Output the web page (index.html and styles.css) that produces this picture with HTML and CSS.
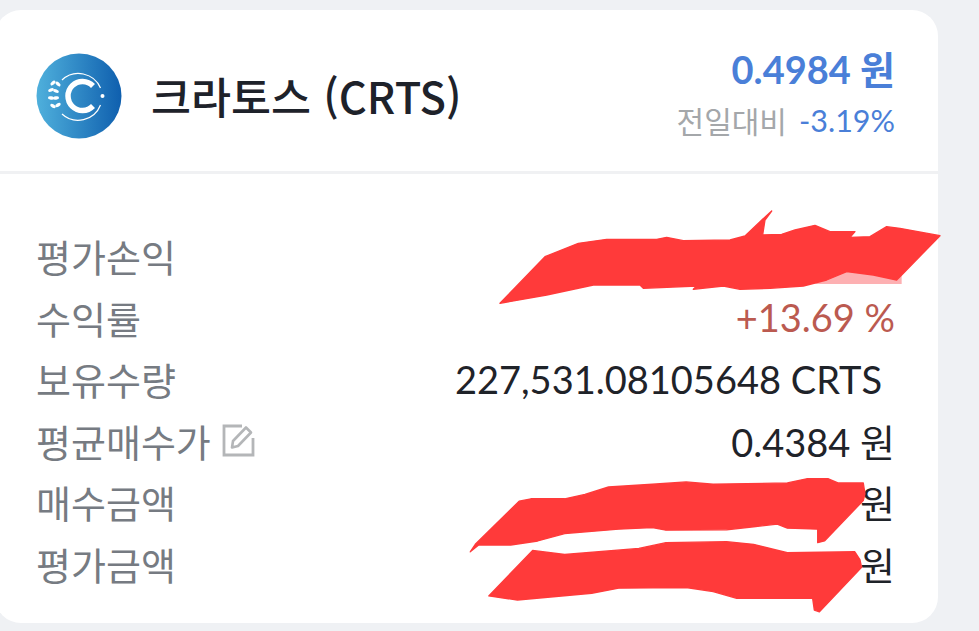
FILE: index.html
```html
<!DOCTYPE html>
<html lang="ko">
<head>
<meta charset="utf-8">
<title>크라토스 (CRTS)</title>
<link rel="stylesheet" href="styles.css">
</head>
<body>
<main class="card">
  <header class="head">
    <div class="coin">
      <svg class="logo" viewBox="0 0 86 86" width="86" height="86" aria-hidden="true">
        <defs>
          <linearGradient id="lg" x1="0" y1="0" x2="1" y2="0">
            <stop offset="0" stop-color="#4fb0dc"/>
            <stop offset="1" stop-color="#0f5fae"/>
          </linearGradient>
        </defs>
        <circle cx="43" cy="43" r="42.5" fill="url(#lg)"/>
        <path d="M57 33 A14.5 14.5 0 1 0 57 53" fill="none" stroke="#fff" stroke-width="5.5"/>
        <path d="M26 27 A24 24 0 0 1 64.5 35" fill="none" stroke="#fff" stroke-width="1.2"/>
        <path d="M64.5 52 A24 24 0 0 1 26 61" fill="none" stroke="#fff" stroke-width="1.2"/>
        <circle cx="66.5" cy="43" r="2" fill="#fff"/>
        <g fill="#fff">
          <ellipse cx="22" cy="31" rx="3" ry="1.7" transform="rotate(40 22 31)"/>
          <ellipse cx="17" cy="30" rx="3" ry="1.7" transform="rotate(-40 17 30)"/>
          <ellipse cx="20" cy="38" rx="3" ry="1.7" transform="rotate(20 20 38)"/>
          <ellipse cx="15" cy="37" rx="3" ry="1.7" transform="rotate(-20 15 37)"/>
          <ellipse cx="20" cy="45" rx="3" ry="1.7" transform="rotate(-10 20 45)"/>
          <ellipse cx="15" cy="45" rx="3" ry="1.7" transform="rotate(10 15 45)"/>
          <ellipse cx="22" cy="52" rx="3" ry="1.7" transform="rotate(-30 22 52)"/>
          <ellipse cx="17" cy="53" rx="3" ry="1.7" transform="rotate(30 17 53)"/>
        </g>
      </svg>
      <h1 class="name">크라토스 (CRTS)</h1>
    </div>
    <div class="quote">
      <div class="price">0.4984 원</div>
      <div class="change"><span class="change-label">전일대비</span><span class="change-value">-3.19%</span></div>
    </div>
  </header>
  <section class="rows">
    <div class="row"><span class="label">평가손익</span><span class="value"></span></div>
    <div class="row"><span class="label">수익률</span><span class="value profit">+13.69 %</span></div>
    <div class="row"><span class="label">보유수량</span><span class="value qty">227,531.08105648 CRTS</span></div>
    <div class="row">
      <span class="label">평균매수가
        <svg class="edit" viewBox="0 0 34 34" width="34" height="34" aria-hidden="true">
          <path d="M20 3H2v29h29V15" fill="none" stroke="#b4b6b8" stroke-width="2.8"/>
          <path d="M11 18 24 4.5l5 5L16 23l-6 1.5z" fill="none" stroke="#b4b6b8" stroke-width="2.6" stroke-linejoin="round"/>
        </svg>
      </span>
      <span class="value">0.4384 원</span>
    </div>
    <div class="row"><span class="label">매수금액</span><span class="value">원</span></div>
    <div class="row"><span class="label">평가금액</span><span class="value">원</span></div>
  </section>
</main>
<svg class="scribbles" viewBox="0 0 979 631" width="979" height="631" aria-hidden="true">
  <g transform="translate(480 200) scale(.33333)">
    <path class="pink" d="M1000 252 1040 240 1100 215 1180 225 1250 240 1265 225 1265 252z"/>
    <path class="red" d="M60 310 195 170 295 130 380 118 530 118 560 112 610 122 750 120 795 108 840 65 875 33 855 60 848 105 905 103 945 90 1005 76 1050 95 1125 95 1110 112 1170 110 1220 80 1260 85 1380 107 1265 225 1250 240 1180 225 1100 215 1040 240 970 258 870 265 780 268 730 258 640 268 650 258 490 265 480 255 340 255 200 285z"/>
  </g>
  <g transform="translate(450 460) scale(.33735)">
    <path class="red" d="M60 272 75 250 205 122 240 115 340 115 400 102 470 80 600 72 700 65 780 72 1000 68 1060 55 1120 55 1150 68 1225 68 1230 100 1225 120 1110 240 1090 245 1090 205 1000 202 970 190 900 198 820 207 640 208 600 200 500 205 340 218 260 240 180 252 85 252z"/>
    <path class="red" d="M115 403 245 268 340 280 560 262 640 245 820 242 900 250 1000 275 1200 272 1215 295 1220 318 1095 450 1080 445 1075 410 850 410 780 390 700 378 500 380 420 395 200 415z"/>
  </g>
</svg>
</body>
</html>
```
FILE: styles.css
```css
* { box-sizing: border-box; }
html, body { margin: 0; height: 631px; overflow: hidden; }
body {
  background: #eff1f4;
  padding-top: 10px;
  font-family: Lato, "Noto Sans CJK KR", sans-serif;
  color: #1f2329;
}
.card {
  width: 943px;
  height: 613px;
  margin-left: -5px;
  background: #fff;
  border-radius: 26px;
}
.head {
  height: 164px;
  padding: 10px 43px 0 41px;
  display: flex;
  justify-content: space-between;
  align-items: center;
  border-bottom: 3px solid #f0f1f3;
}
.coin { display: flex; align-items: center; gap: 29px; }
.logo { display: block; }
.name {
  margin: 0;
  font-family: "Noto Sans CJK KR", sans-serif;
  font-size: 43.5px;
  font-weight: 500;
  line-height: 50px;
  color: #1e222a;
}
.quote { text-align: right; margin-bottom: 5px; }
.price {
  font-size: 38px;
  font-weight: 700;
  line-height: 46px;
  color: #4a7fd8;
  font-family: Lato, "Noto Sans CJK KR", sans-serif;
}
.change {
  display: flex;
  justify-content: flex-end;
  gap: 12px;
  line-height: 42px;
  margin-top: 7px;
}
.change-label {
  font-family: "Noto Sans CJK KR", sans-serif;
  font-size: 30px;
  font-weight: 400;
  color: #a4a7aa;
}
.change-value { font-size: 30.5px; color: #4a7fd8; font-weight: 400; }
.rows { padding: 51px 43px 0 41px; }
.row {
  height: 61.5px;
  display: flex;
  justify-content: space-between;
  align-items: center;
}
.label {
  display: flex;
  align-items: center;
  gap: 11px;
  font-family: "Noto Sans CJK KR", sans-serif;
  font-size: 38px;
  font-weight: 400;
  color: #767b82;
}
.edit { display: block; }
.value { font-size: 38px; color: #1f2329; }
.profit { color: #bb5a50; }
.qty { padding-right: 13px; }
.scribbles { position: absolute; left: 0; top: 0; pointer-events: none; }
.red { fill: #ff3a3a; stroke: #ff3a3a; stroke-width: 4; stroke-linejoin: round; }
.pink { fill: #fdb0b2; }
```
